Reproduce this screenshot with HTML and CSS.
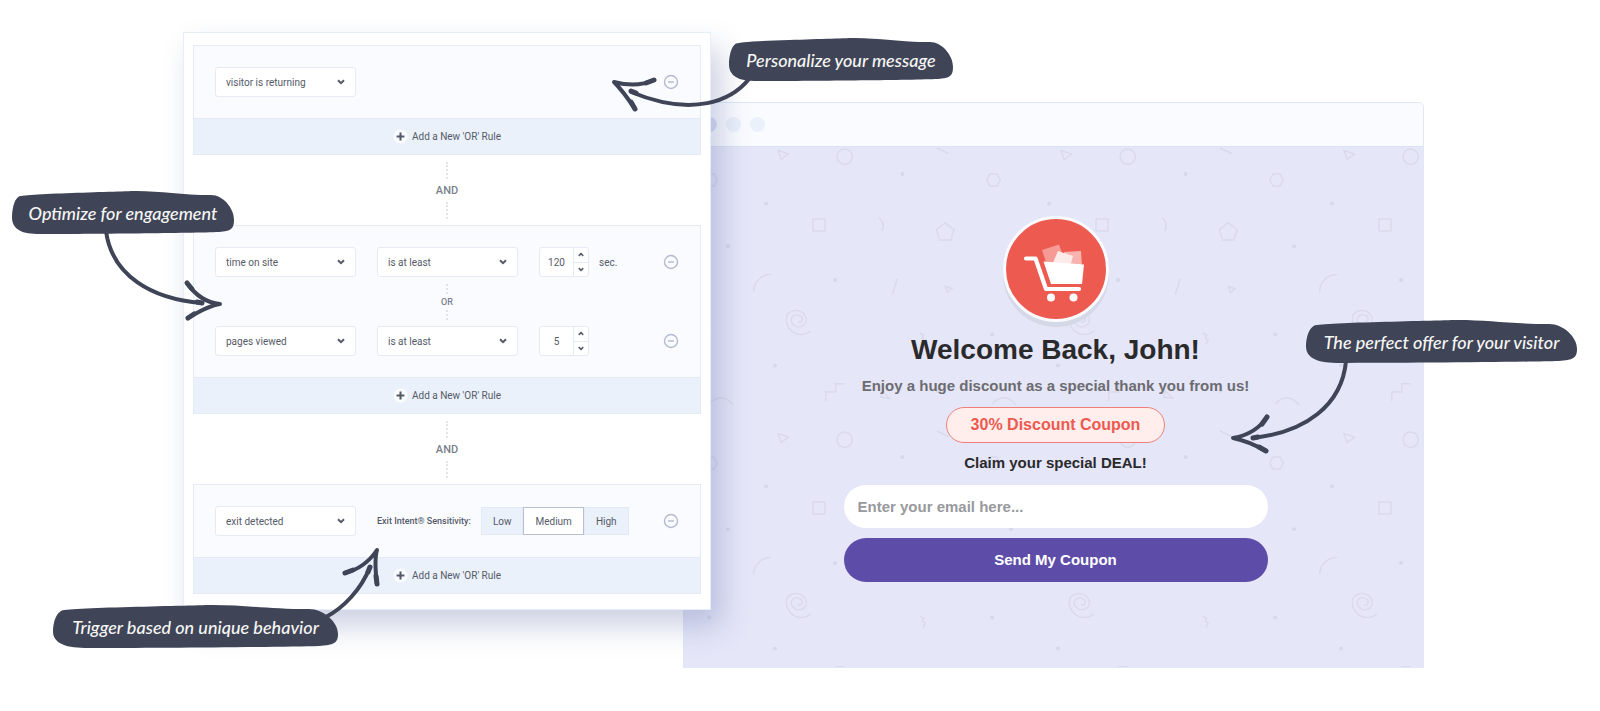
FILE: index.html
```html
<!DOCTYPE html>
<html lang="en">
<head>
<meta charset="utf-8">
<meta name="viewport" content="width=device-width, initial-scale=1">
<title>Targeting rules</title>
<link rel="stylesheet" href="styles.css">
</head>
<body>
<svg class="defs" width="0" height="0" aria-hidden="true">
  <symbol id="chevron" viewBox="0 0 8 6"><path d="M1 1.2 4 4.2 7 1.2" fill="none" stroke="currentColor" stroke-width="2"/></symbol>
  <symbol id="minus" viewBox="0 0 16 16"><circle cx="8" cy="8" r="6.5" fill="none" stroke="currentColor" stroke-width="1.4"/><path d="M5 8h6" stroke="currentColor" stroke-width="1.4"/></symbol>
  <symbol id="plus" viewBox="0 0 16 16"><circle cx="8" cy="8" r="7.5" fill="#fafbfe"/><path d="M8 3.8v8.4M3.8 8h8.4" stroke="currentColor" stroke-width="2.2"/></symbol>
  <symbol id="blob" viewBox="0 0 223 42" preserveAspectRatio="none"><path d="M0 26C0 18 2 9 6 6C8 4 30 3 60 2C90 1 120 0 125 0C150 0 170 4 200 4C212 4 223 17 223 28C223 37 220 39 208 40C180 41 80 42 25 42C8 42 0 36 0 26Z" fill="#3f4457"/></symbol>
</svg>

<main class="stage">
  <section class="panel" aria-label="Display rules">
    <div class="group">
      <div class="rules">
        <div class="rule">
          <div class="select"><select aria-label="Condition"><option>visitor is returning</option></select><svg><use href="#chevron"/></svg></div>
          <button class="remove" type="button" aria-label="Remove rule"><svg><use href="#minus"/></svg></button>
        </div>
      </div>
      <button class="add" type="button"><svg><use href="#plus"/></svg>Add a New 'OR' Rule</button>
    </div>

    <div class="join"><span>AND</span></div>

    <div class="group">
      <div class="rules">
        <div class="rule">
          <div class="select"><select aria-label="Condition"><option>time on site</option></select><svg><use href="#chevron"/></svg></div>
          <div class="select"><select aria-label="Comparison"><option>is at least</option></select><svg><use href="#chevron"/></svg></div>
          <div class="number">
            <input type="text" inputmode="numeric" value="120" aria-label="Seconds">
            <div class="steps">
              <button type="button" aria-label="Increase"><svg class="up"><use href="#chevron"/></svg></button>
              <button type="button" aria-label="Decrease"><svg><use href="#chevron"/></svg></button>
            </div>
          </div>
          <span class="unit">sec.</span>
          <button class="remove" type="button" aria-label="Remove rule"><svg><use href="#minus"/></svg></button>
        </div>
        <div class="join join-small"><span>OR</span></div>
        <div class="rule">
          <div class="select"><select aria-label="Condition"><option>pages viewed</option></select><svg><use href="#chevron"/></svg></div>
          <div class="select"><select aria-label="Comparison"><option>is at least</option></select><svg><use href="#chevron"/></svg></div>
          <div class="number">
            <input type="text" inputmode="numeric" value="5" aria-label="Pages">
            <div class="steps">
              <button type="button" aria-label="Increase"><svg class="up"><use href="#chevron"/></svg></button>
              <button type="button" aria-label="Decrease"><svg><use href="#chevron"/></svg></button>
            </div>
          </div>
          <button class="remove" type="button" aria-label="Remove rule"><svg><use href="#minus"/></svg></button>
        </div>
      </div>
      <button class="add" type="button"><svg><use href="#plus"/></svg>Add a New 'OR' Rule</button>
    </div>

    <div class="join"><span>AND</span></div>

    <div class="group">
      <div class="rules">
        <div class="rule">
          <div class="select"><select aria-label="Condition"><option>exit detected</option></select><svg><use href="#chevron"/></svg></div>
          <fieldset class="sensitivity">
            <legend>Exit Intent® Sensitivity:</legend>
            <div class="segments">
              <label><input type="radio" name="sensitivity">Low</label>
              <label><input type="radio" name="sensitivity" checked>Medium</label>
              <label><input type="radio" name="sensitivity">High</label>
            </div>
          </fieldset>
          <button class="remove" type="button" aria-label="Remove rule"><svg><use href="#minus"/></svg></button>
        </div>
      </div>
      <button class="add" type="button"><svg><use href="#plus"/></svg>Add a New 'OR' Rule</button>
    </div>

    <div class="callout callout-message">
      <svg class="arrow"><path d="M20 41C3 62-35 80-98 54"/><path d="M-75 42Q-92 50-115 44Q-106 53-94 71"/><path class="tip" d="M-98 53l5 2M-75 42l-8 3M-94 71l-4-7"/></svg>
      <svg class="blob"><use href="#blob"/></svg><span>Personalize your message</span>
    </div>
    <div class="callout callout-engagement">
      <svg class="arrow"><path d="M94 40C100 85 140 108 190 112"/><path d="M175 92Q188 111 208 113Q198 114 176 127"/><path class="tip" d="M190 112l-5-1M175 92l5 6M176 127l6-4"/></svg>
      <svg class="blob"><use href="#blob"/></svg><span>Optimize for engagement</span>
    </div>
    <div class="callout callout-trigger">
      <svg class="arrow"><path d="M273 12C290 3 308-15 317-38"/><path d="M292-32Q312-37 324-55Q321-45 324-21"/><path class="tip" d="M317-38l-2 5M292-32l8-3M324-21l-1-8"/></svg>
      <svg class="blob"><use href="#blob"/></svg><span>Trigger based on unique behavior</span>
    </div>
  </section>

  <section class="browser" aria-label="Offer preview">
    <div class="browser-bar"><i></i><i></i><i></i></div>
    <div class="page">
      <svg class="confetti" aria-hidden="true">
        <defs>
          <pattern id="shapes" x="-1" width="283" height="283" patternUnits="userSpaceOnUse">
            <g fill="none" stroke="#dadaec" stroke-width="1.5">
              <path d="M95 3.5 105.500 7 98 12.500ZM254 1l11.500 5.500"/>
              <circle cx="161.700" cy="9.700" r="7.700"/>
              <path d="M24 27h7l3.300 6-3.300 6h-7l-3.300-6Z"/>
              <path d="M130 72h12v12h-12ZM196 70.700q7 6 2.700 13.300"/>
              <path d="M262.300 76l8.700 6.500-3 10.500h-11.500l-3-10.500Z"/>
              <path d="M70.700 144.500A17 17 0 0 1 88 127.500M214.300 131.500l-5 16M262.500 139.500l6.500 2.200-4.500 3.800Z"/>
              <path d="M128 184A15 15 0 0 1 104 168A11 11 0 0 1 123 170A7.500 7.500 0 0 1 110 177A5 5 0 0 1 117 169A3 3 0 0 1 115 175"/>
              <path d="M236.700 186l4 2.300-1.700 2.700 3.300 2.300-2.300 4"/>
              <path d="M142.700 254v-9h10v-8.300h9M199 243.700l-1 6.600 8.700 1ZM26 257Q38 244 50 257.700"/>
            </g>
            <g fill="#d8d8eb">
              <circle cx="219.500" cy="27" r="2"/><circle cx="83" cy="56.500" r="2"/><circle cx="45" cy="99.300" r="2"/><circle cx="152" cy="133" r="2"/><circle cx="92" cy="218.500" r="2"/><circle cx="26.300" cy="187.500" r="2"/><circle cx="254.700" cy="243.700" r="2"/>
            </g>
          </pattern>
        </defs>
        <rect width="100%" height="100%" fill="url(#shapes)"/>
      </svg>
      <form class="offer" onsubmit="return false">
        <div class="badge">
          <svg viewBox="0 0 100 100" aria-hidden="true">
            <path d="M36 31 53 25.500 59 42 41 46Z" fill="#f59a94"/>
            <path d="M58 33 75 32 76 48H60Z" fill="#f8b3ae"/>
            <path d="M52 32 67 37 64 48 46 46Z" fill="#fdebea"/>
            <path d="M37.500 42.500 78 45.500 76 65H45Z" fill="#fff"/>
            <path d="M20 39.500h9.500L40 70h33" fill="none" stroke="#fff" stroke-width="4.200" stroke-linecap="round" stroke-linejoin="round"/>
            <circle cx="45" cy="78.500" r="4" fill="#fff"/><circle cx="67.500" cy="78.500" r="4" fill="#fff"/>
          </svg>
        </div>
        <h1>Welcome Back, John!</h1>
        <p class="lead">Enjoy a huge discount as a special thank you from us!</p>
        <p class="coupon">30% Discount Coupon</p>
        <p class="claim">Claim your special DEAL!</p>
        <input type="email" placeholder="Enter your email here..." aria-label="Email">
        <button class="send" type="submit">Send My Coupon</button>
      </form>
    </div>
    <div class="callout callout-offer">
      <svg class="arrow"><path d="M40 41C36 85 0 112-53 118"/><path d="M-39 97Q-50 114-73 118Q-58 121-40 131"/><path class="tip" d="M-53 118l5-1M-39 97l-5 7M-40 131l-7-4"/></svg>
      <svg class="blob"><use href="#blob"/></svg><span>The perfect offer for your visitor</span>
    </div>
  </section>
</main>
</body>
</html>
```
FILE: styles.css
```css
* { box-sizing: border-box; }

body {
  margin: 0;
  background: #fff;
  color: #555a69;
  font-family: Roboto, "Liberation Sans", sans-serif;
  font-size: 10px;
  font-weight: 400;
}

button, input, select { font: inherit; color: inherit; }
button { cursor: pointer; }

.defs { position: absolute; }

.stage {
  display: grid;
  grid-template-columns: minmax(0, 528fr) minmax(0, 713fr);
  align-items: start;
  padding: 32px 176px 43px 183px;
}

/* Rule builder */
.panel {
  position: relative;
  z-index: 2;
  padding: 12px 9px 15px;
  background: #fff;
  border: 1px solid #e6eff9;
  box-shadow: 10px 16px 28px rgba(72, 88, 150, .28);
}

.group {
  background: #fafbff;
  border: 1px solid #e5ebf6;
}

.rules { padding: 21px; }

.rule {
  display: flex;
  align-items: center;
  gap: 21px;
  height: 30px;
}

.select { position: relative; width: 141px; }

.select select {
  width: 100%;
  height: 30px;
  padding: 0 28px 0 10px;
  appearance: none;
  background: #fff;
  border: 1px solid #e6eaf5;
  border-radius: 3px;
}

.select svg {
  position: absolute;
  right: 11px;
  top: 12px;
  width: 8px;
  height: 6px;
  pointer-events: none;
}

.number {
  display: flex;
  width: 50px;
  height: 30px;
  background: #fff;
  border: 1px solid #e6eaf5;
  border-radius: 3px;
}

.number input {
  flex: 1;
  min-width: 0;
  padding: 0;
  background: none;
  border: 0;
  text-align: center;
}

.steps {
  display: flex;
  flex-direction: column;
  width: 15px;
  border-left: 1px solid #e6eaf5;
}

.steps button {
  display: grid;
  place-items: center;
  flex: 1;
  padding: 0;
  background: none;
  border: 0;
}

.steps button + button { border-top: 1px solid #e6eaf5; }
.steps svg { width: 6px; height: 5px; }
.up { transform: rotate(180deg); }
.unit { margin-left: -11px; }

.remove {
  margin-left: auto;
  padding: 0;
  background: none;
  border: 0;
  color: #b4bacd;
}

.remove svg { display: block; width: 16px; height: 16px; }

.add {
  display: flex;
  align-items: center;
  justify-content: center;
  gap: 4px;
  width: 100%;
  height: 36px;
  padding: 0;
  background: #ebf1fa;
  border: 0;
  border-top: 1px solid #e5ebf6;
}

.add svg { width: 15px; height: 15px; }

.join {
  display: flex;
  flex-direction: column;
  align-items: center;
  justify-content: center;
  gap: 4px;
  height: 70px;
  font-size: 11px;
  font-weight: 500;
  line-height: 15px;
  color: #7b7f8b;
}

.join::before, .join::after {
  content: "";
  height: 17px;
  border-left: 2px dotted #e3e3f0;
}

.join-small { gap: 1px; height: 49px; font-size: 9px; line-height: 14px; }
.join-small::before, .join-small::after { height: 10px; }

.sensitivity {
  display: flex;
  align-items: center;
  gap: 10px;
  margin: 0;
  padding: 0;
  border: 0;
}

.sensitivity legend {
  float: left;
  padding: 0;
  font-size: 9px;
  font-weight: 500;
  white-space: nowrap;
}

.segments { display: flex; }

.segments label {
  display: grid;
  place-items: center;
  height: 28px;
  padding: 0 11px;
  background: #ebf1fa;
  border: 1px solid #e3e9f5;
}

.segments input { position: absolute; opacity: 0; pointer-events: none; }
.segments label:has(:checked) { background: #fff; border-color: #b9bfd3; }

/* Offer preview */
.browser {
  position: relative;
  margin: 70px 0 0 -28px;
  border: 1px solid #dfe8f7;
  border-radius: 5px 5px 0 0;
}

.browser-bar {
  display: flex;
  align-items: center;
  gap: 9px;
  height: 44px;
  padding-left: 18px;
  background: #fafbff;
  border-bottom: 1px solid #d9e3f5;
  border-radius: 5px 5px 0 0;
}

.browser-bar i { width: 15px; height: 15px; border-radius: 50%; background: #ebf1fa; }
.browser-bar i:first-child { background: #dcdff7; }

.page {
  position: relative;
  padding: 69px 20px 85px 24px;
  background: #e5e6f8;
  font-family: "Liberation Sans", Arial, sans-serif;
  font-weight: 700;
}

.confetti { position: absolute; inset: 0; width: 100%; height: 100%; }

.offer {
  position: relative;
  display: flex;
  flex-direction: column;
  align-items: center;
  max-width: 424px;
  margin: 0 auto;
  font-size: 16px;
  line-height: 20px;
}

.badge {
  width: 106px;
  height: 106px;
  background: #ed5a50;
  border: 3px solid #fafbff;
  border-radius: 50%;
  box-shadow: 0 5px 0 #d5d8e6;
}

.badge svg { display: block; }

.offer h1 { margin: 10px 0 8px; color: #2a2a2c; font-size: 28px; line-height: 36px; }
.offer p { margin: 0; }
.offer .lead { color: #6c6c70; font-size: 15px; }

.offer .coupon {
  margin: 11px 0 10px;
  padding: 7px 24px;
  background: #ffeeec;
  border: 1px solid #ef7f78;
  border-radius: 18px;
  color: #ed5a50;
}

.offer .claim { color: #2a2a2c; font-size: 15px; }

.offer input {
  width: 100%;
  height: 43px;
  margin: 12px 0 10px;
  padding: 0 14px;
  background: #fff;
  border: 0;
  border-radius: 22px;
  font-size: 15px;
}

.offer input::placeholder { color: #98999d; opacity: 1; }

.send {
  width: 100%;
  height: 44px;
  background: #5e4da8;
  border: 0;
  border-radius: 22px;
  color: #fff;
  font-size: 15px;
}

/* Hand-drawn notes over both windows */
.callout {
  position: absolute;
  display: grid;
  place-items: center;
  height: 43px;
  color: #f6f6f4;
  font-family: Lato, sans-serif;
  font-size: 18px;
  font-weight: 500;
  font-style: italic;
  line-height: 24px;
  white-space: nowrap;
}

.callout span { position: relative; }
.blob { position: absolute; inset: 0; width: 100%; height: 100%; }

.arrow {
  position: absolute;
  left: 0;
  top: 0;
  width: 100%;
  height: 100%;
  overflow: visible;
  fill: none;
  stroke: #3f4457;
  stroke-width: 4;
  stroke-linecap: round;
  stroke-linejoin: round;
  pointer-events: none;
}

.arrow .tip { stroke-width: 5; }

.callout-message { left: calc(100% + 19px); top: 5px; width: 224px; }
.callout-engagement { left: -172px; top: 158px; width: 222px; }
.callout-trigger { left: -131px; top: 572px; width: 285px; }
.callout-offer { right: -154px; top: 217px; width: 271px; }
```
